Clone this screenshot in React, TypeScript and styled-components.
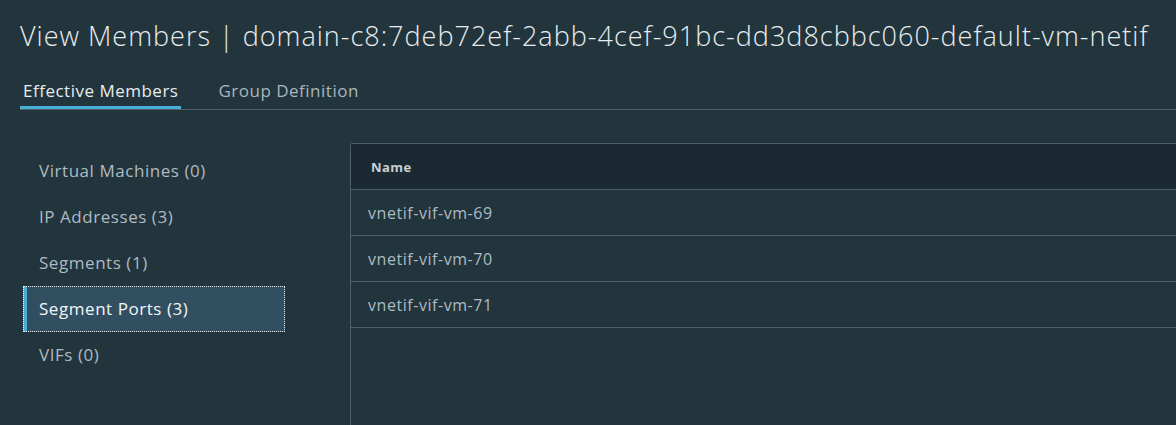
import React from "react";
import styled, { createGlobalStyle } from "styled-components";

const GlobalStyle = createGlobalStyle`
  html, body {
    margin: 0;
    padding: 0;
    background: #22343c;
    font-family: "Open Sans", Lato, sans-serif;
    overflow: hidden;
  }
`;

const categories = [
  { label: "Virtual Machines", count: 0 },
  { label: "IP Addresses", count: 3 },
  { label: "Segments", count: 1 },
  { label: "Segment Ports", count: 3 },
  { label: "VIFs", count: 0 },
];

const members = ["vnetif-vif-vm-69", "vnetif-vif-vm-70", "vnetif-vif-vm-71"];

const App = () => {
  const selected = "Segment Ports";
  return (
    <Page>
      <GlobalStyle />
      <Title>
        View Members | domain-c8:7deb72ef-2abb-4cef-91bc-dd3d8cbbc060-default-vm-netif
      </Title>
      <Tabs>
        <Tab active>Effective Members</Tab>
        <Tab>Group Definition</Tab>
      </Tabs>
      <Body>
        <Sidebar>
          {categories.map(({ label, count }) => (
            <NavItem key={label} active={label === selected}>
              {`${label} (${count})`}
            </NavItem>
          ))}
        </Sidebar>
        <Grid>
          <HeaderRow>
            <HeaderCell>Name</HeaderCell>
          </HeaderRow>
          {members.map((name) => (
            <Row key={name}>
              <Cell>{name}</Cell>
            </Row>
          ))}
        </Grid>
      </Body>
    </Page>
  );
};

const Page = styled.div`
  height: 425px;
  padding-left: 20px;
  display: flex;
  flex-direction: column;
`;

const Title = styled.h1`
  margin: 18px 0 0 0;
  font-size: 27px;
  line-height: 36px;
  font-weight: 300;
  letter-spacing: 1px;
  color: #e9ecef;
  white-space: nowrap;
`;

const Tabs = styled.div`
  display: flex;
  gap: 34px;
  margin-top: 22px;
  border-bottom: 1px solid #4e5f67;
`;

const Tab = styled.div<{ active?: boolean }>`
  padding: 0 3px;
  height: 33px;
  line-height: 30px;
  font-size: 17px;
  letter-spacing: 0.5px;
  color: ${({ active }) => (active ? "#e9ecef" : "#a9b6be")};
  border-bottom: 3px solid ${({ active }) => (active ? "#49afd9" : "transparent")};
  box-sizing: border-box;
`;

const Body = styled.div`
  display: flex;
  flex: 1;
  margin-top: 33px;
  min-height: 0;
`;

const Sidebar = styled.nav`
  width: 262px;
  margin-left: 3px;
  padding-top: 5px;
  display: flex;
  flex-direction: column;
`;

const NavItem = styled.div<{ active?: boolean }>`
  height: 46px;
  line-height: 46px;
  box-sizing: border-box;
  padding-left: ${({ active }) => (active ? "12px" : "16px")};
  font-size: 17px;
  letter-spacing: 0.55px;
  color: ${({ active }) => (active ? "#f3f6f8" : "#adbbc4")};
  background: ${({ active }) => (active ? "#324f61" : "transparent")};
  border-left: ${({ active }) => (active ? "4px solid #49afd9" : "none")};
  outline: ${({ active }) => (active ? "1px dotted #e8eef2" : "none")};
  outline-offset: -1px;
`;

const Grid = styled.div`
  flex: 1;
  margin-left: 65px;
  border: 1px solid #4e5f67;
  border-right: none;
  border-bottom: none;
  border-top-left-radius: 3px;
  display: flex;
  flex-direction: column;
`;

const HeaderRow = styled.div`
  height: 46px;
  display: flex;
  align-items: center;
  background: #1b2a32;
  border-bottom: 1px solid #4e5f67;
  box-sizing: border-box;
`;

const HeaderCell = styled.div`
  padding-left: 20px;
  font-size: 13px;
  font-weight: 700;
  letter-spacing: 0.4px;
  color: #c7d1d6;
`;

const Row = styled.div`
  height: 46px;
  display: flex;
  align-items: center;
  border-bottom: 1px solid #4e5f67;
  box-sizing: border-box;
`;

const Cell = styled.div`
  padding-left: 17px;
  font-size: 16px;
  letter-spacing: 0.55px;
  color: #adbbc4;
`;

export default App;
